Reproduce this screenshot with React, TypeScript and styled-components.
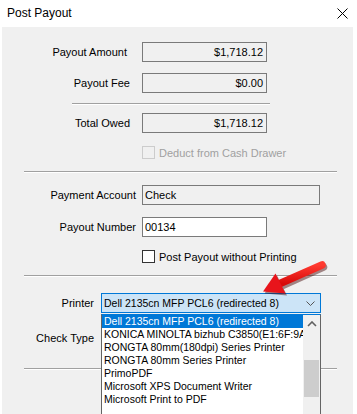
import React from "react";
import styled, { createGlobalStyle } from "styled-components";

const Global = createGlobalStyle`
  html, body { margin: 0; padding: 0; background: #fff; }
  * { box-sizing: border-box; }
`;

const Window = styled.div`
  position: relative;
  width: 357px;
  height: 414px;
  overflow: hidden;
  background: #fff;
  font-family: "Liberation Sans", Arial, sans-serif;
  color: #000;
`;

const TitleBar = styled.div`
  height: 27px;
  display: flex;
  align-items: center;
  justify-content: space-between;
  padding: 0 9px 1px 7px;
`;

const Title = styled.div`
  font-size: 12px;
`;

const Body = styled.div`
  margin: 0 4px 0 2px;
  height: 387px;
  background: #f0f0f0;
  padding-top: 15px;
  display: flex;
  flex-direction: column;
  font-size: 11px;
`;

const Row = styled.div<{ $mt: number }>`
  display: flex;
  align-items: center;
  height: 20px;
  margin-top: ${(p) => p.$mt}px;
`;

const Label = styled.div<{ $w: number; $pr: number }>`
  flex: none;
  width: ${(p) => p.$w}px;
  padding-right: ${(p) => p.$pr}px;
  text-align: right;
  white-space: nowrap;
`;

const TextBox = styled.div<{ $w: number; $white?: boolean; $right?: boolean }>`
  width: ${(p) => p.$w}px;
  height: 20px;
  border: 1px solid #7a7a7a;
  background: ${(p) => (p.$white ? "#fff" : "#f0f0f0")};
  display: flex;
  align-items: center;
  justify-content: ${(p) => (p.$right ? "flex-end" : "flex-start")};
  padding: 0 3px 0 2px;
  white-space: nowrap;
`;

const Separator = styled.div<{ $mt: number; $ml: number; $w: number }>`
  margin-top: ${(p) => p.$mt}px;
  margin-left: ${(p) => p.$ml}px;
  width: ${(p) => p.$w}px;
  height: 2px;
  border-top: 1px solid #a0a0a0;
  border-bottom: 1px solid #fff;
`;

const CheckRow = styled.div<{ $mt: number; $disabled?: boolean }>`
  display: flex;
  align-items: center;
  gap: 4px;
  height: 13px;
  margin-top: ${(p) => p.$mt}px;
  margin-left: 140px;
  color: ${(p) => (p.$disabled ? "#a0a0a0" : "#000")};
`;

const CheckBox = styled.div<{ $disabled?: boolean }>`
  width: 13px;
  height: 13px;
  border: 1px solid ${(p) => (p.$disabled ? "#cccccc" : "#333333")};
  background: ${(p) => (p.$disabled ? "#f0f0f0" : "#ffffff")};
`;

const ComboWrap = styled.div`
  position: relative;
`;

const Combo = styled.div<{ $active?: boolean }>`
  width: 220px;
  height: 20px;
  border: 1px solid ${(p) => (p.$active ? "#0078d7" : "#7a7a7a")};
  background: ${(p) => (p.$active ? "#cce4f7" : "#f0f0f0")};
  display: flex;
  align-items: center;
  padding: 0 5px 0 2px;
  font-size: 10.5px;
  white-space: nowrap;
`;

const ComboText = styled.span`
  flex: 1;
`;

const DropList = styled.div`
  position: absolute;
  left: 0;
  top: 21px;
  width: 220px;
  height: 120px;
  border: 1px solid #646464;
  border-top-color: #0078d7;
  background: #fff;
  display: flex;
  z-index: 5;
`;

const Items = styled.div`
  flex: 1;
  overflow: hidden;
  font-size: 10.5px;
`;

const Item = styled.div<{ $sel?: boolean }>`
  height: 13px;
  line-height: 13px;
  padding-left: 2px;
  white-space: nowrap;
  overflow: hidden;
  background: ${(p) => (p.$sel ? "#0078d7" : "transparent")};
  color: ${(p) => (p.$sel ? "#fff" : "#000")};
`;

const ScrollBar = styled.div`
  flex: none;
  width: 17px;
  background: #f0f0f0;
  display: flex;
  flex-direction: column;
  align-items: center;
`;

const ScrollArrow = styled.div`
  height: 17px;
  width: 17px;
  display: flex;
  align-items: center;
  justify-content: center;
`;

const Thumb = styled.div`
  margin-top: 28px;
  width: 15px;
  height: 37px;
  background: #cdcdcd;
`;

const ArrowOverlay = styled.svg`
  position: absolute;
  left: 0;
  top: 0;
  pointer-events: none;
  z-index: 10;
`;

const printers = [
  "Dell 2135cn MFP PCL6 (redirected 8)",
  "KONICA MINOLTA bizhub C3850(E1:6F:9A)",
  "RONGTA 80mm(180dpi) Series Printer",
  "RONGTA 80mm Series Printer",
  "PrimoPDF",
  "Microsoft XPS Document Writer",
  "Microsoft Print to PDF",
];

export default function App() {
  return (
    <>
      <Global />
      <Window>
        <TitleBar>
          <Title>Post Payout</Title>
          <svg width="11" height="11" viewBox="0 0 11 11">
            <path d="M0.5 0.5 L10.5 10.5 M10.5 0.5 L0.5 10.5" stroke="#000" strokeWidth="1" />
          </svg>
        </TitleBar>
        <Body>
          <Row $mt={0}>
            <Label $w={140} $pr={15}>Payout Amount</Label>
            <TextBox $w={125} $right>$1,718.12</TextBox>
          </Row>
          <Row $mt={11}>
            <Label $w={140} $pr={12}>Payout Fee</Label>
            <TextBox $w={125} $right>$0.00</TextBox>
          </Row>
          <Separator $mt={10} $ml={70} $w={198} />
          <Row $mt={8}>
            <Label $w={140} $pr={12}>Total Owed</Label>
            <TextBox $w={125} $right>$1,718.12</TextBox>
          </Row>
          <CheckRow $mt={13} $disabled>
            <CheckBox $disabled />
            <span>Deduct from Cash Drawer</span>
          </CheckRow>
          <Separator $mt={12} $ml={22} $w={313} />
          <Row $mt={12}>
            <Label $w={140} $pr={6}>Payment Account</Label>
            <TextBox $w={178}>Check</TextBox>
          </Row>
          <Row $mt={12}>
            <Label $w={140} $pr={6}>Payout Number</Label>
            <TextBox $w={125} $white>00134</TextBox>
          </Row>
          <CheckRow $mt={13}>
            <CheckBox />
            <span>Post Payout without Printing</span>
          </CheckRow>
          <Separator $mt={12} $ml={22} $w={313} />
          <Row $mt={16}>
            <Label $w={99} $pr={7}>Printer</Label>
            <ComboWrap>
              <Combo $active>
                <ComboText>{printers[0]}</ComboText>
                <svg width="9" height="5" viewBox="0 0 9 5">
                  <path d="M0.5 0.5 L4.5 4.5 L8.5 0.5" stroke="#555" strokeWidth="1" fill="none" />
                </svg>
              </Combo>
              <DropList>
                <Items>
                  {printers.map((p, i) => (
                    <Item key={p} $sel={i === 0}>
                      {p}
                    </Item>
                  ))}
                </Items>
                <ScrollBar>
                  <ScrollArrow>
                    <svg width="10" height="6" viewBox="0 0 10 6">
                      <path d="M1 5 L5 1 L9 5" stroke="#606060" strokeWidth="1.6" fill="none" />
                    </svg>
                  </ScrollArrow>
                  <Thumb />
                </ScrollBar>
              </DropList>
            </ComboWrap>
          </Row>
          <Row $mt={15}>
            <Label $w={99} $pr={7}>Check Type</Label>
            <Combo />
          </Row>
          <Separator $mt={20} $ml={22} $w={313} />
        </Body>
        <ArrowOverlay width="357" height="414" viewBox="0 0 357 414">
          <g transform="translate(1.5,2)" opacity="0.45">
            <path d="M322 265 L281 283.5" stroke="#400000" strokeWidth="7.5" strokeLinecap="round" />
            <path d="M263 291.5 L275.5 273.5 L285.5 293.5 Z" fill="#400000" />
          </g>
          <defs>
            <linearGradient id="ar" x1="0" y1="0" x2="0" y2="1">
              <stop offset="0" stopColor="#ff3a30" />
              <stop offset="1" stopColor="#d80a0a" />
            </linearGradient>
          </defs>
          <path d="M322 265 L280 283.5" stroke="url(#ar)" strokeWidth="7.5" strokeLinecap="round" />
          <path d="M263 291.5 L275.5 273.5 L285.5 293.5 Z" fill="#e8141b" />
        </ArrowOverlay>
      </Window>
    </>
  );
}
